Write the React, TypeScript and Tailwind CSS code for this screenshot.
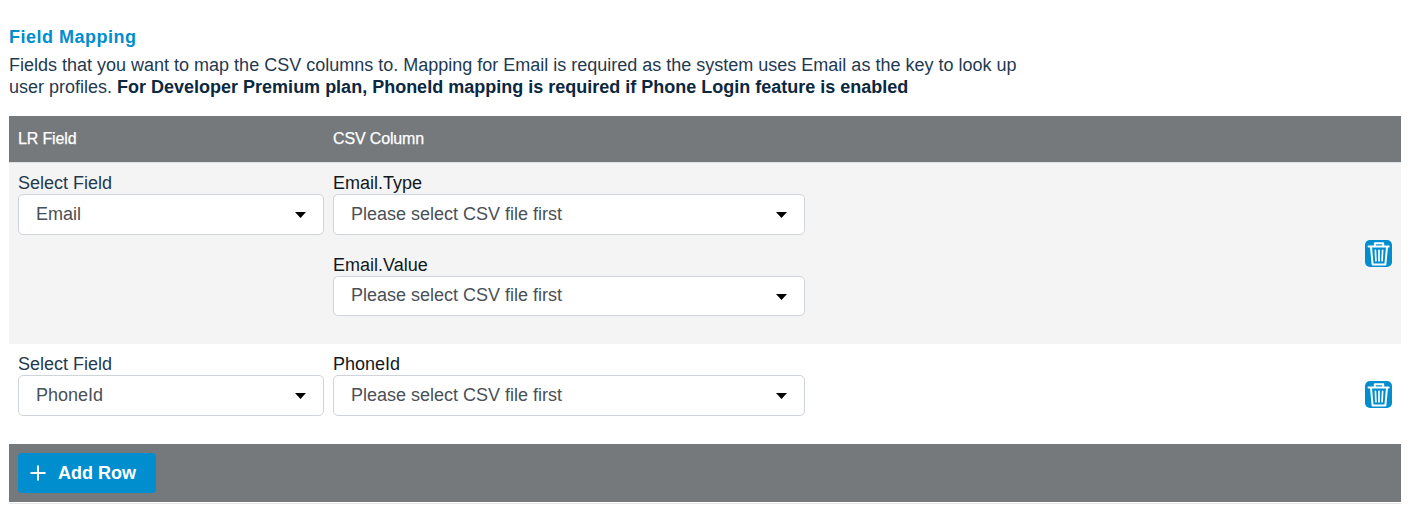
type SelectProps = { value: string; size?: string };

function SelectBox({ value, size = "h-[41px]" }: SelectProps) {
  return (
    <button
      type="button"
      className={`flex w-full items-center justify-between rounded-[5px] border border-[#ced4da] bg-white px-[17px] text-left text-[#495057] ${size}`}
    >
      <span className="-mt-[2px] leading-[22px]">{value}</span>
      <svg width="11" height="6" viewBox="0 0 11 6" className="mt-[17px] self-start" fill="#000">
        <path d="M0 0h11L5.5 6z" />
      </svg>
    </button>
  );
}

function DeleteButton() {
  return (
    <button type="button" aria-label="Delete row" className="flex size-[27px] items-center justify-center rounded-[5px] bg-[#008ecf]">
      <svg width="27" height="27" viewBox="0 0 27 27" fill="none" stroke="#fff" strokeWidth="2" strokeLinecap="round" strokeLinejoin="round">
        <path d="M3.5 6.6h20.2" />
        <path d="M9.8 6.2V3.3h8.4v2.9" />
        <path d="M6 7l1.6 17.4h12.8L22 7" />
        <path d="M10.4 10.3l.5 10.5M14 10.3v10.5M17.6 10.3l-.5 10.5" strokeWidth="1.7" />
      </svg>
    </button>
  );
}

function MappingField({ label, size }: { label: string; size?: string }) {
  return (
    <div>
      <div className="h-[22px] leading-[22px] text-[#111820]">{label}</div>
      <SelectBox value="Please select CSV file first" size={size} />
    </div>
  );
}

function SourceField({ value }: { value: string }) {
  return (
    <div className="w-[306px]">
      <div className="h-[22px] leading-[22px] text-[#1f3a50]">Select Field</div>
      <SelectBox value={value} />
    </div>
  );
}

export default function App() {
  return (
    <main className="h-[511px] overflow-hidden bg-white pt-[26px] pr-[10px] pl-[9px] font-['Liberation_Sans',Arial,sans-serif] text-[18px]">
      <h2 className="h-[28px] leading-[22px] font-bold tracking-[0.5px] text-[#008ecf]">Field Mapping</h2>
      <p className="h-[62px] leading-[22px] text-[#1f3a50]">
        Fields that you want to map the CSV columns to. Mapping for Email is required as the system uses Email as the key to look up
        <br />
        user profiles.{" "}
        <strong className="font-bold text-[#0b2840]">
          For Developer Premium plan, PhoneId mapping is required if Phone Login feature is enabled
        </strong>
      </p>
      <section>
        <header className="flex h-[46px] items-center bg-[#75797c] pl-[9px] text-[16px] tracking-[-0.15px] text-white [-webkit-text-stroke:0.25px_white]">
          <div className="w-[315px]">LR Field</div>
          <div>CSV Column</div>
        </header>
        <div className="flex h-[182px] gap-[9px] border-t border-[#dee2e6] bg-[#f4f4f4] px-[9px] pt-[9px]">
          <SourceField value="Email" />
          <div className="flex w-[472px] flex-col gap-[19px]">
            <MappingField label="Email.Type" />
            <MappingField label="Email.Value" size="h-[40px]" />
          </div>
          <div className="ml-auto pt-[68px]">
            <DeleteButton />
          </div>
        </div>
        <div className="flex h-[100px] gap-[9px] px-[9px] pt-[9px]">
          <SourceField value="PhoneId" />
          <div className="w-[472px]">
            <MappingField label="PhoneId" />
          </div>
          <div className="ml-auto pt-[28px]">
            <DeleteButton />
          </div>
        </div>
        <footer className="h-[58px] bg-[#75797c] px-[9px] pt-[9px]">
          <button type="button" className="flex h-[40px] w-[138px] items-center rounded-[4px] bg-[#008ecf] pl-[12px] font-bold text-white">
            <svg width="16" height="16" viewBox="0 0 16 16" className="mr-[12px]" fill="none" stroke="#fff" strokeWidth="2">
              <path d="M8 .5v15M.5 8h15" />
            </svg>
            Add Row
          </button>
        </footer>
        <div className="mt-px h-px bg-[#e6e6e6]" />
      </section>
    </main>
  );
}
